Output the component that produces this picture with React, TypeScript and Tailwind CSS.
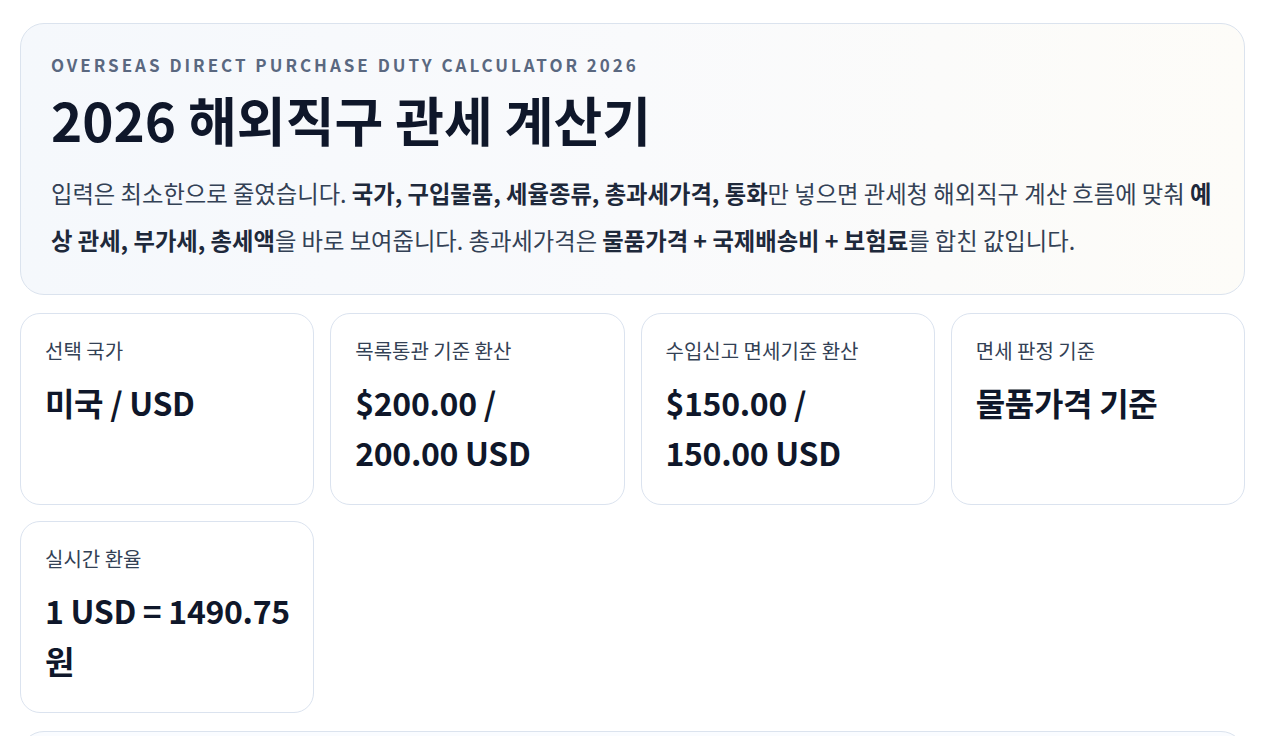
import React from 'react';

const font = '"Noto Sans CJK KR", "Noto Sans", sans-serif';

interface Stat {
  label: string;
  value: string[];
}

const stats: Stat[] = [
  { label: '선택 국가', value: ['미국 / USD'] },
  { label: '목록통관 기준 환산', value: ['$200.00 /', '200.00 USD'] },
  { label: '수입신고 면세기준 환산', value: ['$150.00 /', '150.00 USD'] },
  { label: '면세 판정 기준', value: ['물품가격 기준'] },
  { label: '실시간 환율', value: ['1 USD = 1490.75', '원'] },
];

function StatCard({ stat }: { stat: Stat }) {
  return (
    <div className="rounded-[20px] border border-[#dbe3ef] bg-white pl-6 pr-5 pt-[23px] pb-[27px]">
      <div className="text-[20px] leading-[28px] text-[#334155]">{stat.label}</div>
      <div className="mt-3 text-[32px] font-bold leading-[50px] tracking-[-0.01em] text-[#0f172a]">
        {stat.value.map((line, i) => (
          <div key={i} className="whitespace-nowrap">{line}</div>
        ))}
      </div>
    </div>
  );
}

export default function App() {
  return (
    <div className="min-h-screen bg-white" style={{ fontFamily: font }}>
      <div className="ml-5 w-[1225px] pt-[23px] pb-10">
        {/* 상단 소개 */}
        <section className="rounded-[24px] border border-[#dbe3ee] bg-gradient-to-r from-[#f5f8fc] via-[#f9fafc] to-[#fdfcf8] px-[30px] pt-[30px] pb-[30px]">
          <p className="text-[17px] font-bold uppercase leading-[22px] tracking-[0.175em] text-[#5a6880]">
            Overseas Direct Purchase Duty Calculator 2026
          </p>
          <h1 className="mt-3 text-[53px] font-bold leading-[62px] text-[#0f172a]">
            2026 해외직구 관세 계산기
          </h1>
          <p className="mt-5 text-[23.3px] leading-[47px] text-[#334155]">
            입력은 최소한으로 줄였습니다. <b className="font-bold text-[#1e293b]">국가, 구입물품, 세율종류, 총과세가격, 통화</b>만 넣으면 관세청 해외직구 계산 흐름에 맞춰{' '}
            <b className="font-bold text-[#1e293b]">예상 관세, 부가세, 총세액</b>을 바로 보여줍니다. 총과세가격은{' '}
            <b className="font-bold text-[#1e293b]">물품가격 + 국제배송비 + 보험료</b>를 합친 값입니다.
          </p>
        </section>

        {/* 요약 카드 */}
        <div className="mt-[18px] grid grid-cols-4 gap-4">
          {stats.map((s) => (
            <StatCard key={s.label} stat={s} />
          ))}
        </div>

        {/* 입력 영역 */}
        <section className="mt-[18px] h-[300px] rounded-[24px] border border-[#dbe3ee] bg-[#fafcff]" />
      </div>
    </div>
  );
}
